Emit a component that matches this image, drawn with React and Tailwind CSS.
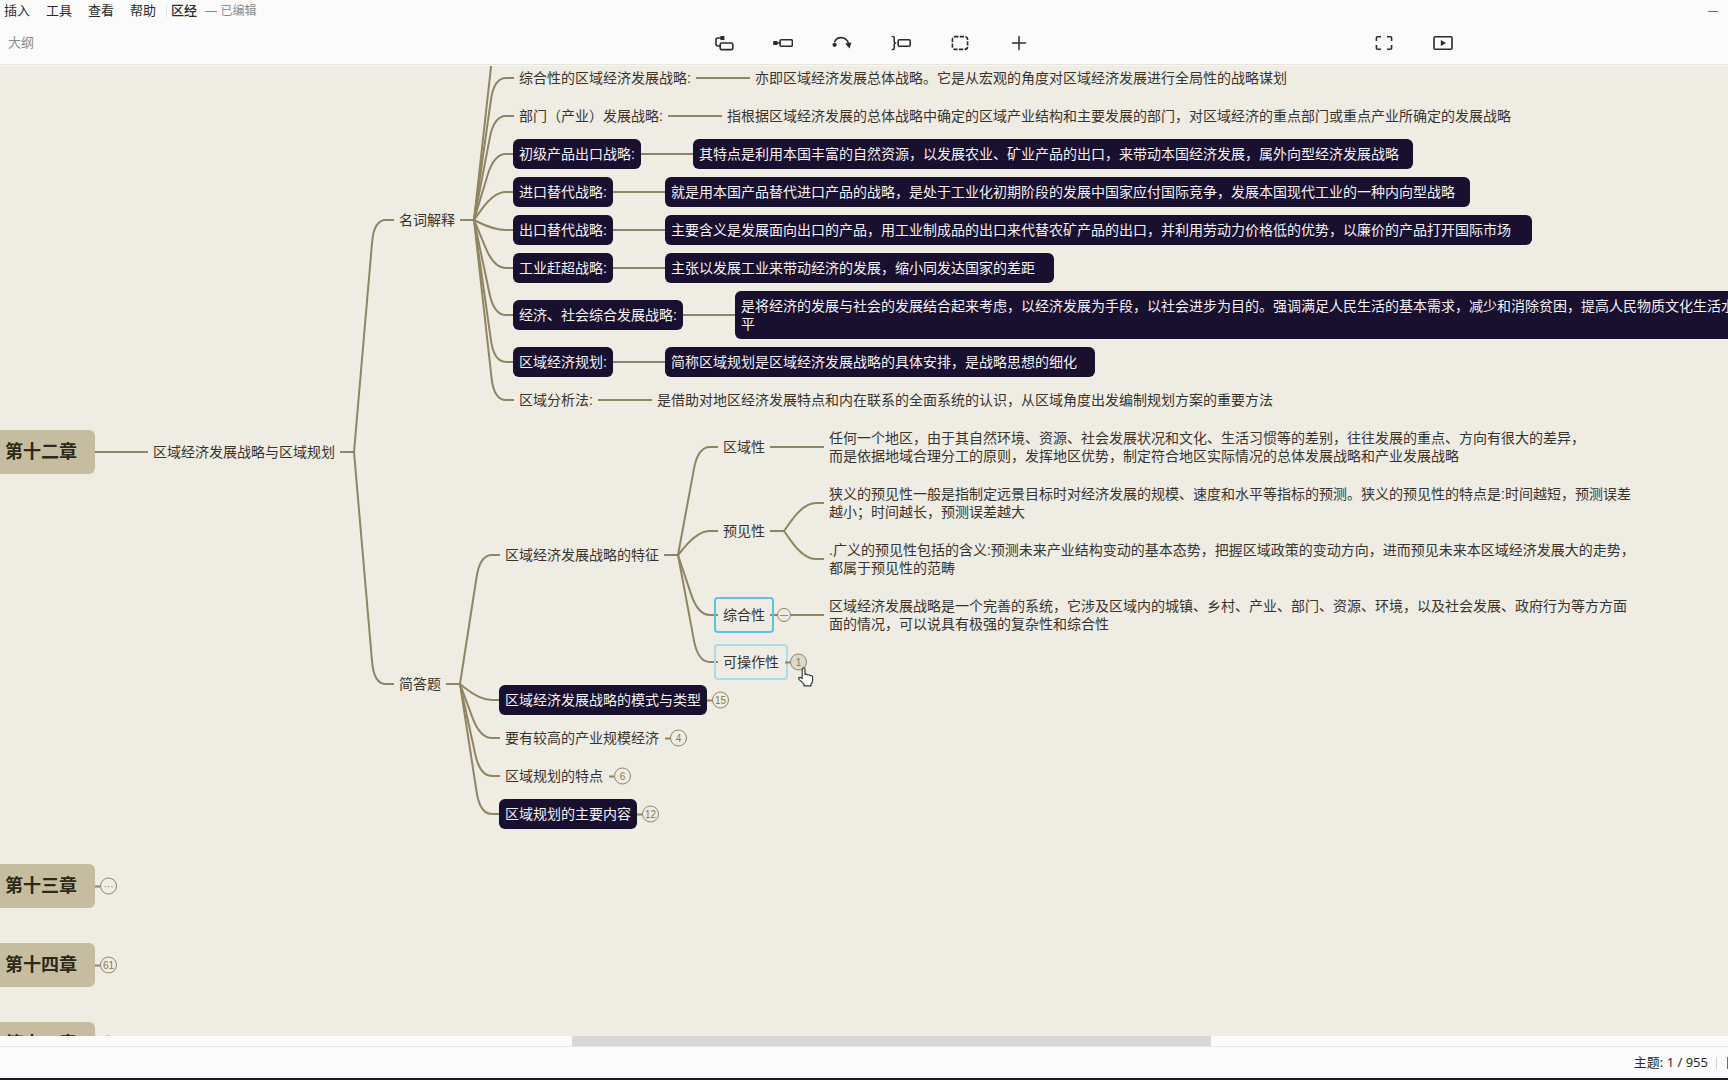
import React, { useState } from 'react';

const MENUS = ['插入', '工具', '查看', '帮助'];

// Every topic is placed by its left edge (x) and vertical centre (y) on the canvas
const TOPICS = [
    { x: 147, y: 387, w: 194, text: '区域经济发展战略与区域规划' },
    { x: 393, y: 155, w: 68, text: '名词解释' },
    { x: 393, y: 619, w: 54, text: '简答题' },

    { x: 513, y: 13, w: 184, text: '综合性的区域经济发展战略:' },
    { x: 749, y: 13, w: 560, text: '亦即区域经济发展总体战略。它是从宏观的角度对区域经济发展进行全局性的战略谋划' },
    { x: 513, y: 51, w: 156, text: '部门（产业）发展战略:' },
    { x: 721, y: 51, w: 810, text: '指根据区域经济发展的总体战略中确定的区域产业结构和主要发展的部门，对区域经济的重点部门或重点产业所确定的发展战略' },
    { x: 513, y: 89, w: 128, dark: true, text: '初级产品出口战略:' },
    { x: 693, y: 89, w: 720, dark: true, text: '其特点是利用本国丰富的自然资源，以发展农业、矿业产品的出口，来带动本国经济发展，属外向型经济发展战略' },
    { x: 513, y: 127, w: 100, dark: true, text: '进口替代战略:' },
    { x: 665, y: 127, w: 805, dark: true, text: '就是用本国产品替代进口产品的战略，是处于工业化初期阶段的发展中国家应付国际竞争，发展本国现代工业的一种内向型战略' },
    { x: 513, y: 165, w: 100, dark: true, text: '出口替代战略:' },
    { x: 665, y: 165, w: 867, dark: true, text: '主要含义是发展面向出口的产品，用工业制成品的出口来代替农矿产品的出口，并利用劳动力价格低的优势，以廉价的产品打开国际市场' },
    { x: 513, y: 203, w: 100, dark: true, text: '工业赶超战略:' },
    { x: 665, y: 203, w: 389, dark: true, text: '主张以发展工业来带动经济的发展，缩小同发达国家的差距' },
    { x: 513, y: 250, w: 170, dark: true, text: '经济、社会综合发展战略:' },
    { x: 735, y: 250, w: 1020, dark: true, text: '是将经济的发展与社会的发展结合起来考虑，以经济发展为手段，以社会进步为目的。强调满足人民生活的基本需求，减少和消除贫困，提高人民物质文化生活水\n平' },
    { x: 513, y: 297, w: 100, dark: true, text: '区域经济规划:' },
    { x: 665, y: 297, w: 430, dark: true, text: '简称区域规划是区域经济发展战略的具体安排，是战略思想的细化' },
    { x: 513, y: 335, w: 86, text: '区域分析法:' },
    { x: 651, y: 335, w: 640, text: '是借助对地区经济发展特点和内在联系的全面系统的认识，从区域角度出发编制规划方案的重要方法' },

    { x: 499, y: 490, w: 166, text: '区域经济发展战略的特征' },
    { x: 499, y: 635, w: 208, dark: true, badge: '15', text: '区域经济发展战略的模式与类型' },
    { x: 499, y: 673, w: 166, badge: '4', text: '要有较高的产业规模经济' },
    { x: 499, y: 711, w: 110, badge: '6', text: '区域规划的特点' },
    { x: 499, y: 749, w: 138, dark: true, badge: '12', text: '区域规划的主要内容' },

    { x: 717, y: 382, w: 54, text: '区域性' },
    { x: 717, y: 466, w: 54, text: '预见性' },
    { x: 717, y: 550, w: 54, text: '综合性' },
    { x: 717, y: 597, w: 68, badge: '1', text: '可操作性' },
    { x: 823, y: 382, w: 780, text: '任何一个地区，由于其自然环境、资源、社会发展状况和文化、生活习惯等的差别，往往发展的重点、方向有很大的差异，\n而是依据地域合理分工的原则，发挥地区优势，制定符合地区实际情况的总体发展战略和产业发展战略' },
    { x: 823, y: 438, w: 830, text: '狭义的预见性一般是指制定远景目标时对经济发展的规模、速度和水平等指标的预测。狭义的预见性的特点是:时间越短，预测误差\n越小；时间越长，预测误差越大' },
    { x: 823, y: 494, w: 830, text: '.广义的预见性包括的含义:预测未来产业结构变动的基本态势，把握区域政策的变动方向，进而预见未来本区域经济发展大的走势，\n都属于预见性的范畴' },
    { x: 823, y: 550, w: 830, text: '区域经济发展战略是一个完善的系统，它涉及区域内的城镇、乡村、产业、部门、资源、环境，以及社会发展、政府行为等方方面\n面的情况，可以说具有极强的复杂性和综合性' },
];

const CHAPTERS = [
    { y: 387, text: '第十二章' },
    { y: 821, text: '第十三章', badge: '···' },
    { y: 900, text: '第十四章', badge: '61' },
    { y: 979, text: '第十五章', badge: '48' },
];

// from: right edge of the parent, to: left edge of the children
const BRANCHES = [
    { from: 341, y: 387, to: 393, ends: [155, 619] },
    { from: 461, y: 155, to: 513, ends: [-25, 13, 51, 89, 127, 165, 203, 250, 297, 335] },
    { from: 447, y: 619, to: 499, ends: [490, 635, 673, 711, 749] },
    { from: 665, y: 490, to: 717, ends: [382, 466, 550, 597] },
    { from: 771, y: 466, to: 823, ends: [438, 494] },
];

const LINKS = [
    [95, 148, 387],
    [696, 750, 13],
    [668, 722, 51],
    [641, 693, 89],
    [613, 665, 127],
    [613, 665, 165],
    [613, 665, 203],
    [683, 735, 250],
    [613, 665, 297],
    [598, 652, 335],
    [770, 824, 382],
    [770, 824, 550],
];

// Straight run towards the elbow, then a soft corner into the horizontal
const branchPath = (x, y, to, end) => {
    const dy = end - y;
    const t = Math.min(0.8, 22 / Math.hypot(20, dy));
    const cx = x + 20;
    return `M${x} ${y}L${cx - 20 * t} ${end - dy * t}Q${cx} ${end} ${cx + 12} ${end}H${to + 1}`;
};

const Connectors = () => (
    <svg className="absolute inset-0 w-full h-full" fill="none" stroke="#8f8562" strokeWidth="2" aria-hidden="true">
        {BRANCHES.map(b => (
            <g key={b.from}>
                <path d={`M${b.from - 1} ${b.y}H${b.from + 13}`} />
                {b.ends.map(end => (
                    <path key={end} d={branchPath(b.from + 13, b.y, b.to, end)} />
                ))}
            </g>
        ))}
        {LINKS.map(([x1, x2, y]) => (
            <path key={`${x1}-${y}`} d={`M${x1} ${y}H${x2}`} />
        ))}
    </svg>
);

const Badge = ({ label, active }) => (
    <div className="absolute left-full top-1/2 -translate-y-1/2 flex items-center">
        <span className="w-[5px] h-0.5 bg-[#8f8562]" />
        <button
            aria-label={`展开 ${label}`}
            className={`w-[17px] h-[17px] rounded-full border border-[#8f8562] text-[10px] leading-none font-normal text-[#857b5a] flex items-center justify-center ${active ? 'bg-[#dedac9]' : 'bg-[#efece4]'}`}
        >
            {label}
        </button>
    </div>
);

const Topic = ({ topic, ring }) => (
    <div
        className="absolute -translate-y-1/2"
        style={{ left: topic.x, top: topic.y, width: topic.w }}
    >
        <p className={`px-1.5 py-1.5 rounded-md text-sm leading-[18px] whitespace-pre ${topic.dark ? 'bg-[#190f2e] text-[#f4f2f7]' : 'text-[#38342d]'}`}>
            {topic.text}
        </p>
        {ring && <span className={`absolute -inset-[3px] rounded border-2 ${ring}`} />}
        {topic.badge && <Badge label={topic.badge} active={topic.badge === '1'} />}
    </div>
);

const ToolButton = ({ label, children }) => (
    <button aria-label={label} title={label} className="w-[59px] h-8 flex items-center justify-center text-[#2b2b2b]">
        <svg width="20" height="16" viewBox="0 0 20 16" fill="none" stroke="currentColor" strokeWidth="1.6" strokeLinecap="round" strokeLinejoin="round">
            {children}
        </svg>
    </button>
);

const Toolbar = () => (
    <div className="grid grid-cols-[694fr_auto_306fr_auto_256fr] items-center h-11 pt-0.5">
        <a href="#outline" className="pl-2 text-[13px] text-[#8a8a8e]">大纲</a>
        <div className="flex">
            <ToolButton label="主题">
                <path d="M8 3H4a2 2 0 0 0-2 2v4a2 2 0 0 0 2 2h2" />
                <rect x="6.2" y="8" width="12.6" height="6.6" rx="1.4" />
                <rect x="6.4" y="1" width="4" height="4" rx="0.6" fill="currentColor" stroke="none" />
            </ToolButton>
            <ToolButton label="子主题">
                <rect x="0.2" y="6" width="4.2" height="4" rx="0.6" fill="currentColor" stroke="none" />
                <path d="M4 8h3" />
                <rect x="7" y="4.8" width="12.4" height="6.4" rx="1.2" />
            </ToolButton>
            <ToolButton label="联系">
                <circle cx="2.6" cy="9.8" r="2.1" fill="currentColor" stroke="none" />
                <path d="M2.8 6.6C5.4 1.2 14.6 .8 16.6 9" />
                <path d="M13.2 8.6l6.2-1-1.8 5.8z" fill="currentColor" stroke="none" />
            </ToolButton>
            <ToolButton label="概要">
                <path d="M1.4 1.4h.6q1.2 0 1.2 1.4v3.4q0 1.5 1.4 1.8-1.4.3-1.4 1.8v3.4q0 1.4-1.2 1.4h-.6" strokeWidth="1.5" />
                <rect x="7.2" y="4.8" width="12" height="6.4" rx="1.2" />
            </ToolButton>
            <ToolButton label="外框">
                <rect x="2.4" y="1.6" width="15.2" height="12.8" rx="2.8" strokeLinecap="butt" strokeDasharray="4.2 1.4" strokeDashoffset="1" />
            </ToolButton>
            <ToolButton label="插入">
                <path d="M10 1.6v12.8M3.6 8h12.8" strokeWidth="1.5" />
            </ToolButton>
        </div>
        <span />
        <div className="flex">
            <ToolButton label="专注">
                <path d="M7 1.8H3.4q-1 0-1 1V6M13 1.8h3.6q1 0 1 1V6M2.4 10v3.2q0 1 1 1H7M17.6 10v3.2q0 1-1 1H13" strokeLinecap="butt" />
            </ToolButton>
            <ToolButton label="演示">
                <rect x="1" y="1.8" width="18" height="12.4" rx="1.2" />
                <path d="M7.8 5l5.2 3-5.2 3z" fill="currentColor" stroke="none" />
            </ToolButton>
        </div>
        <span />
    </div>
);

const App = () => {
    const [selected, setSelected] = useState('综合性');

    const ringFor = (text) => {
        if (text === selected) return 'border-[#5fc1de]';
        if (text === '可操作性') return 'border-[#a9dce6]';
        return null;
    };

    return (
        <div className="h-screen flex flex-col overflow-hidden bg-[#fbfbfb] font-['Liberation_Sans','Noto_Sans_CJK_SC',sans-serif]">
            <header className="relative z-10 border-b border-[#e6e3e1] shadow-[0_1px_0_#f8f7f5]">
                <div className="flex items-center h-5 pt-0.5 pl-1 pr-2 text-[13px] text-[#2b2b2b]">
                    <nav className="flex gap-4">
                        {MENUS.map(m => (
                            <button key={m}>{m}</button>
                        ))}
                    </nav>
                    <span className="w-px h-3 bg-[#e0e0e0] ml-2.5 mr-1" />
                    <span className="font-medium">区经</span>
                    <span className="ml-2 text-xs text-[#8a8a8e]">— 已编辑</span>
                    <button aria-label="最小化" className="ml-auto w-3 h-4 flex items-center">
                        <span className="w-2.5 h-px bg-[#6b6b6b]" />
                    </button>
                </div>
                <Toolbar />
            </header>

            <main className="relative flex-1 overflow-hidden bg-[#efece4]">
                <Connectors />
                {CHAPTERS.map(c => (
                    <div
                        key={c.text}
                        className="absolute left-0 w-[95px] h-11 -translate-y-1/2 pl-[5px] flex items-center rounded-r-md bg-[#c6bda0] text-lg font-bold text-[#2d2817]"
                        style={{ top: c.y }}
                    >
                        {c.text}
                        {c.badge && <Badge label={c.badge} />}
                    </div>
                ))}
                {TOPICS.map(t => (
                    <div key={t.text} onClick={() => setSelected(t.text)}>
                        <Topic topic={t} ring={ringFor(t.text)} />
                    </div>
                ))}
                <button
                    aria-label="收起"
                    className="absolute left-[777px] top-[550px] -translate-y-1/2 w-3.5 h-3.5 rounded-full border border-[#8f8562] bg-[#efece4] flex items-center justify-center"
                >
                    <span className="w-2 h-px bg-[#9a9175]" />
                </button>
                {/* Pointer */}
                <svg className="absolute left-[797px] top-[602px]" width="18" height="20" viewBox="0 0 18 20" fill="#fff" stroke="#3a3a3a" strokeWidth="1.2" strokeLinejoin="round" aria-hidden="true">
                    <path d="M5.2 11.6V2.4q0-1.5 1.4-1.5T8 2.4v5q1.6-.8 2.6.5 1.6-.5 2.4.8 2.4-.6 2.6 1.6v3.2q0 2-1.6 3.4v1.9H7v-1.9L2.2 12.6q-1-1.4 0-2 .9-.6 3 1z" />
                </svg>
            </main>

            <div className="flex h-2.5">
                <span className="w-[33.1%]" />
                <span className="w-[37%] bg-[#d9d7da]" />
            </div>
            <footer className="flex items-center justify-end h-8 border-t border-[#e6e6e6] text-[13px] text-[#2b2b2b] font-['Noto_Sans','Noto_Sans_CJK_SC',sans-serif]">
                <span>主题: 1 / 955</span>
                <span className="w-px h-3 bg-[#d4d4d4] ml-2 mr-2.5" />
                <span className="w-px h-3 bg-[#6b6b6b]" />
            </footer>
            <div className="h-0.5 bg-[#1e1b20]" />
        </div>
    );
};

export default App;
